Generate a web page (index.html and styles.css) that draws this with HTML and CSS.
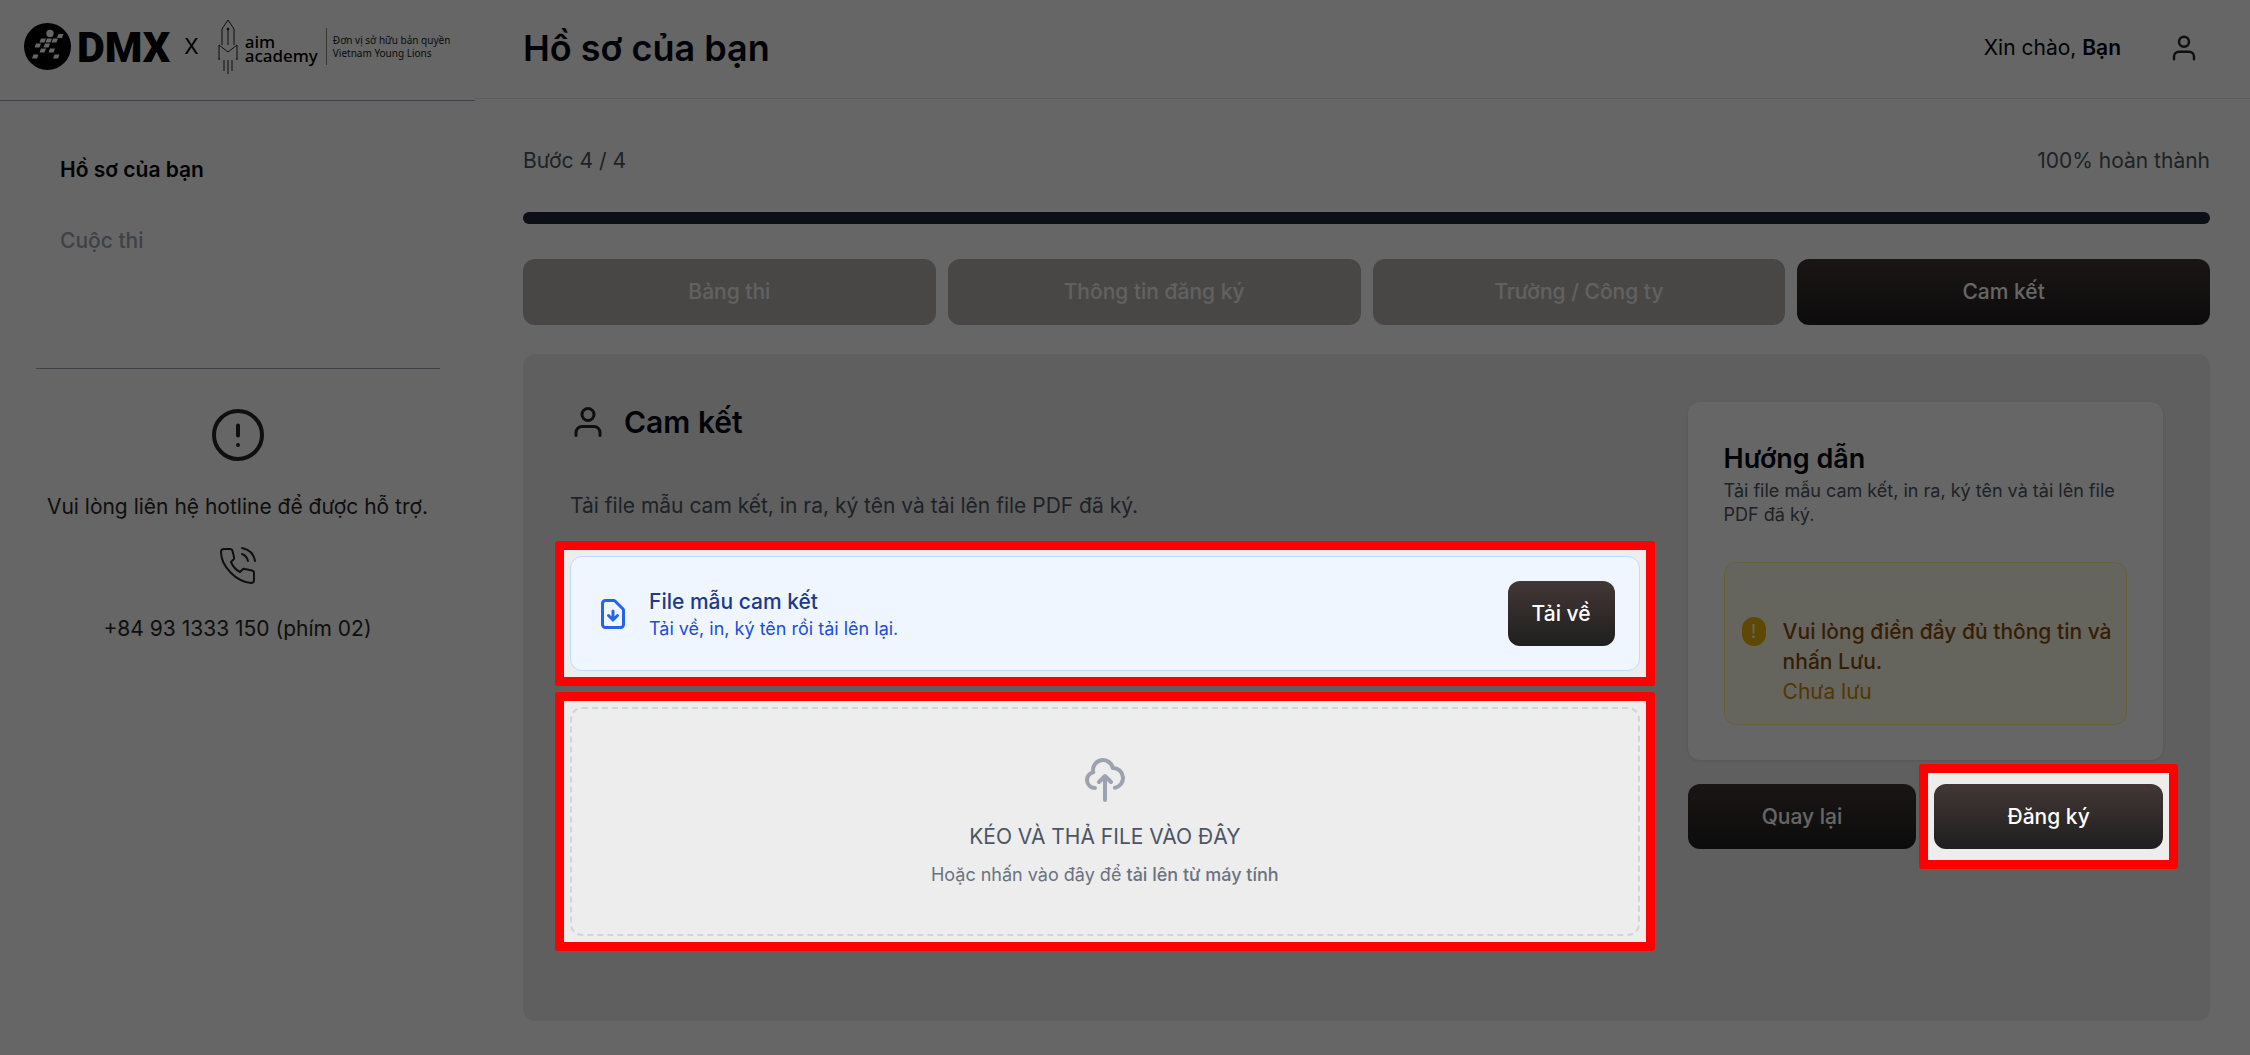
FILE: index.html
```
<!DOCTYPE html>
<html lang="vi">
<head>
<meta charset="UTF-8">
<meta name="viewport" content="width=device-width, initial-scale=1.0">
<title>Hồ sơ của bạn</title>
<link rel="stylesheet" href="styles.css">
</head>
<body>
<div class="layout">
    <aside class="sidebar">
        <div class="brand">
            <svg class="brand-mark" viewBox="0 0 47 47" aria-hidden="true">
                <circle cx="23.5" cy="23.5" r="23.5" fill="#000"/>
                <g fill="#fff">
                    <circle cx="26" cy="10.500" r="3.7"/>
                    <path d="M34.500 11h5l-1.500 4h-5zM29 15.500h5l-1.500 4h-5zM23 15.500h5l-1.500 4h-5zM17 15.500h5l-1.500 4h-5zM12 20.500h5l-1.500 4h-5zM21 20.500h5l-1.500 4h-5zM17 25.500h5l-1.500 4h-5zM26 25.500h5l-1.500 4h-5zM9.500 31.500h5l-1.500 4h-5zM30.500 31.500h5l-1.500 4h-5z"/>
                </g>
            </svg>
            <span class="brand-name">DMX</span>
            <span class="brand-x">X</span>
            <svg class="brand-rocket" viewBox="0 0 22 56" fill="none" stroke="#222" aria-hidden="true">
                <path d="M5 26V10l6-9 6 9v16M11 10v16M2 40V26l9 7 9-7v14M1 40h2M19 40h2M7 41v11M11 41v14M15 41v11"/>
                <circle cx="11" cy="10" r="1" fill="#222"/>
            </svg>
            <span class="academy">aim<br>academy</span>
            <span class="owner">Đơn vị sở hữu bản quyền<br>Vietnam Young Lions</span>
        </div>
        <nav class="menu">
            <a href="#" class="menu-link active">Hồ sơ của bạn</a>
            <a href="#" class="menu-link">Cuộc thi</a>
        </nav>
        <div class="support">
            <svg class="support-alert" viewBox="0 0 54 54" fill="none" stroke="#2a2726" stroke-width="4" stroke-linecap="round" aria-hidden="true">
                <circle cx="27" cy="27" r="24"/>
                <path d="M27 17.500v10M27 37v.1"/>
            </svg>
            <p>Vui lòng liên hệ hotline để được hỗ trợ.</p>
            <svg class="support-phone" viewBox="0 0 36 40" fill="none" stroke="#2a2726" stroke-width="2" stroke-linecap="round" stroke-linejoin="round" aria-hidden="true">
                <path d="M4 3h6q2 0 2.500 2l1.500 6q.5 2-1 3l-2 2q3 7 9 10l2-2q1.500-1.500 3-1l7 1.500q2 .5 2 2.500v7q0 3-3 3Q20 36 11 27 1 17 1 6q0-3 3-3zM22 8q5 2 6 7M22 2q11 2 13 13"/>
            </svg>
            <p>+84 93 1333 150 (phím 02)</p>
        </div>
    </aside>

    <main class="main">
        <header class="topbar">
            <h1>Hồ sơ của bạn</h1>
            <div class="account">
                <span>Xin chào, <strong>Bạn</strong></span>
                <svg class="icon-user" viewBox="0 0 24 24" aria-hidden="true">
                    <path d="M20 21v-2a4 4 0 0 0-4-4H8a4 4 0 0 0-4 4v2"/>
                    <circle cx="12" cy="7" r="4"/>
                </svg>
            </div>
        </header>

        <div class="content">
            <div class="progress-text">
                <span>Bước 4 / 4</span>
                <span>100% hoàn thành</span>
            </div>
            <div class="progress"><div class="progress-fill" style="width: 100%"></div></div>

            <div class="steps">
                <button type="button" class="step">Bảng thi</button>
                <button type="button" class="step">Thông tin đăng ký</button>
                <button type="button" class="step">Trường / Công ty</button>
                <button type="button" class="step btn">Cam kết</button>
            </div>

            <div class="panel">
                <section class="commit">
                    <h2 class="commit-title">
                        <svg class="icon-user" viewBox="0 0 24 24" aria-hidden="true">
                            <path d="M20 21v-2a4 4 0 0 0-4-4H8a4 4 0 0 0-4 4v2"/>
                            <circle cx="12" cy="7" r="4"/>
                        </svg>
                        Cam kết
                    </h2>
                    <p class="commit-text">Tải file mẫu cam kết, in ra, ký tên và tải lên file PDF đã ký.</p>

                    <div class="spotlight">
                        <div class="template">
                            <svg class="template-icon" viewBox="0 0 24 24" aria-hidden="true">
                                <path d="M12 10v6m0 0l-3-3m3 3l3-3m2 8H7a2 2 0 01-2-2V5a2 2 0 012-2h5.586a1 1 0 01.707.293l5.414 5.414a1 1 0 01.293.707V19a2 2 0 01-2 2z"/>
                            </svg>
                            <div class="template-info">
                                <p class="template-name">File mẫu cam kết</p>
                                <p class="template-note">Tải về, in, ký tên rồi tải lên lại.</p>
                            </div>
                            <button type="button" class="btn">Tải về</button>
                        </div>
                    </div>

                    <div class="spotlight">
                        <label class="dropzone">
                            <input type="file" class="file-input" accept="application/pdf">
                            <svg class="dropzone-icon" viewBox="0 0 24 24" aria-hidden="true">
                                <path d="M7 16a4 4 0 01-.88-7.903A5 5 0 1115.9 6L16 6a5 5 0 011 9.900M15 13l-3-3m0 0l-3 3m3-3v12"/>
                            </svg>
                            <span class="dropzone-title">KÉO VÀ THẢ FILE VÀO ĐÂY</span>
                            <span class="dropzone-note">Hoặc nhấn vào đây để <b>tải lên từ máy tính</b></span>
                        </label>
                    </div>
                </section>

                <section class="side">
                    <div class="guide">
                        <h3>Hướng dẫn</h3>
                        <p>Tải file mẫu cam kết, in ra, ký tên và tải lên file PDF đã ký.</p>
                        <div class="notice">
                            <span class="notice-icon">!</span>
                            <div>
                                <p class="notice-title">Vui lòng điền đầy đủ thông tin và nhấn Lưu.</p>
                                <p class="notice-status">Chưa lưu</p>
                            </div>
                        </div>
                    </div>
                    <div class="actions">
                        <button type="button" class="btn">Quay lại</button>
                        <div class="spotlight">
                            <button type="submit" class="btn">Đăng ký</button>
                        </div>
                    </div>
                </section>
            </div>
        </div>
    </main>
</div>
<div class="overlay"></div>
</body>
</html>
```
FILE: styles.css
```
/* Basic styling */
* {
    box-sizing: border-box;
}
body {
    font-family: Inter, "Liberation Sans", sans-serif;
    font-size: 21px;
    line-height: 30px;
    margin: 0;
    color: #030712;
    background-color: #fff;
}
h1, h2, h3, p {
    margin: 0;
    font-weight: 400;
}
button {
    font: inherit;
    font-weight: 500;
    border: none;
    border-radius: 12px;
    cursor: pointer;
}
svg {
    display: block;
    flex: none;
}
.layout {
    display: flex;
    min-height: 100vh;
}

/* Dimmed page with highlighted areas above it */
.overlay {
    position: fixed;
    inset: 0;
    background: rgba(0, 0, 0, 0.6);
    z-index: 1;
}
.spotlight {
    position: relative;
    z-index: 2;
}
.spotlight::before {
    content: "";
    position: absolute;
    inset: -15px;
    border: 9px solid #f00;
    border-radius: 3px;
    background: #ededed;
}
.spotlight > * {
    position: relative;
}

/* Sidebar */
.sidebar {
    width: 475px;
    flex: none;
}
.brand {
    display: flex;
    align-items: center;
    height: 101px;
    padding: 0 0 7px 24px;
    border-bottom: 1px solid #9ca3af;
    color: #000;
}
.brand-mark {
    width: 47px;
    height: 47px;
    margin-right: 6px;
}
.brand-name {
    font-family: Roboto, sans-serif;
    font-size: 43px;
    font-weight: 900;
    line-height: 48px;
}
.brand-x {
    margin: 0 18px 0 14px;
}
.brand-rocket {
    width: 22px;
    height: 56px;
}
.academy {
    margin: 0 8px 0 6px;
    padding-top: 4px;
    font-family: "Noto Sans", sans-serif;
    font-size: 17px;
    font-weight: 500;
    line-height: 14px;
}
.owner {
    padding: 6px 0 5px 6px;
    border-left: 1px solid #888;
    font-family: "Noto Sans", sans-serif;
    font-size: 10px;
    line-height: 13px;
    white-space: nowrap;
    color: #222;
}
.menu {
    display: flex;
    flex-direction: column;
    gap: 41px;
    height: 268px;
    margin: 0 35px 0 36px;
    padding: 54px 24px;
    border-bottom: 1px solid #9ca3af;
}
.menu-link {
    font-weight: 500;
    color: #9ca3af;
    text-decoration: none;
}
.menu-link.active {
    font-weight: 600;
    color: #030712;
}
.support {
    display: flex;
    flex-direction: column;
    align-items: center;
    padding-top: 39px;
    color: #2a2726;
}
.support-alert {
    width: 54px;
    height: 54px;
    margin-bottom: 30px;
}
.support-phone {
    width: 36px;
    height: 40px;
    margin: 24px 0 28px;
}

/* Top bar */
.main {
    flex: 1;
    min-width: 0;
}
.topbar {
    display: flex;
    align-items: center;
    justify-content: space-between;
    height: 99px;
    padding: 0 51px 3px 48px;
    border-bottom: 1px solid #e5e7eb;
}
.topbar h1 {
    font-size: 36px;
    font-weight: 600;
    line-height: 48px;
}
.topbar strong {
    font-weight: 600;
}
.account {
    display: flex;
    align-items: center;
    gap: 48px;
}
.icon-user {
    width: 30px;
    height: 30px;
    fill: none;
    stroke: #2a2726;
    stroke-width: 2;
    stroke-linecap: round;
    stroke-linejoin: round;
}

/* Progress and steps */
.content {
    padding: 47px 40px 34px 48px;
}
.progress-text {
    display: flex;
    justify-content: space-between;
    color: #4b5563;
}
.progress {
    height: 12px;
    margin: 36px 0 35px;
    border-radius: 6px;
    background: #e5e7eb;
}
.progress-fill {
    height: 100%;
    border-radius: 6px;
    background: #1f2937;
}
.steps {
    display: grid;
    grid-template-columns: repeat(4, 1fr);
    gap: 12px;
    margin-bottom: 29px;
}
.step {
    height: 66px;
    background: #b6b1ac;
    color: #f3f3f3;
}
.btn {
    height: 65px;
    padding: 0 24px;
    background: linear-gradient(#423735, #1f1f1f);
    color: #fff;
}
.step.btn {
    height: 66px;
}

/* Panel */
.panel {
    display: grid;
    grid-template-columns: 9fr 4fr;
    gap: 48px;
    min-height: 667px;
    padding: 48px 47px;
    border-radius: 12px;
    background: #ededed;
}
.commit-title {
    display: flex;
    align-items: center;
    gap: 18px;
    font-size: 30px;
    font-weight: 600;
    line-height: 40px;
}
.commit-title .icon-user {
    width: 36px;
    height: 36px;
}
.commit-text {
    margin: 49px 0 35px;
    color: #4b5563;
}
.commit .spotlight {
    margin-bottom: 36px;
}
.template {
    display: flex;
    align-items: center;
    gap: 18px;
    padding: 24px;
    border: 1px solid #bfdbfe;
    border-radius: 12px;
    background: #eff6ff;
}
.template-icon {
    width: 36px;
    height: 36px;
    fill: none;
    stroke: #2563eb;
    stroke-width: 2;
    stroke-linecap: round;
    stroke-linejoin: round;
}
.template-info {
    flex: 1;
}
.template-name {
    font-weight: 500;
    color: #1e3a8a;
}
.template-note {
    font-size: 18px;
    line-height: 24px;
    color: #1d4ed8;
}
.dropzone {
    display: flex;
    flex-direction: column;
    align-items: center;
    padding: 47px 48px;
    border: 2px dashed #d1d5db;
    border-radius: 12px;
    cursor: pointer;
}
.file-input {
    position: absolute;
    opacity: 0;
    width: 1px;
    height: 1px;
}
.dropzone-icon {
    width: 48px;
    height: 48px;
    fill: none;
    stroke: #9ca3af;
    stroke-width: 2;
    stroke-linecap: round;
    stroke-linejoin: round;
}
.dropzone-title {
    margin: 18px 0 11px;
    color: #4b5563;
}
.dropzone-note {
    font-size: 18px;
    line-height: 24px;
    color: #6b7280;
}
.dropzone-note b {
    font-weight: 500;
}

/* Guide column */
.guide {
    padding: 36px 36px 35px;
    border-radius: 12px;
    background: #fff;
    box-shadow: 0 1px 3px rgba(0, 0, 0, 0.1);
}
.guide h3 {
    font-size: 27px;
    font-weight: 600;
    line-height: 41px;
}
.guide > p {
    font-size: 18px;
    line-height: 24px;
    color: #4b5563;
}
.notice {
    display: flex;
    gap: 17px;
    margin-top: 35px;
    padding: 54px 8px 17px 17px;
    border: 1px solid #fef08a;
    border-radius: 12px;
    background: #fefce8;
}
.notice-icon {
    flex: none;
    width: 24px;
    height: 29px;
    border-radius: 12px;
    background: #eab308;
    color: #fff;
    font-size: 18px;
    line-height: 29px;
    text-align: center;
}
.notice-title {
    font-weight: 500;
    color: #854d0e;
}
.notice-status {
    color: #ca8a04;
}
.actions {
    display: grid;
    grid-template-columns: 1fr 1fr;
    gap: 18px;
    margin-top: 24px;
}
.actions .btn {
    width: 100%;
}
.actions .spotlight::before {
    inset: -20px -15px;
}
```
